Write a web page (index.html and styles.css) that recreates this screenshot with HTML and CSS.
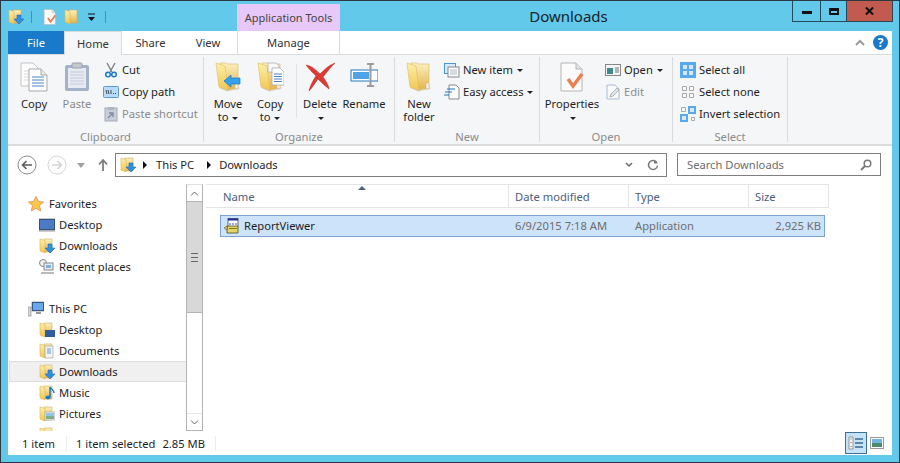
FILE: index.html
```html
<!DOCTYPE html>
<html lang="en">
<head>
    <meta charset="UTF-8">
    <meta name="viewport" content="width=device-width, initial-scale=1.0">
    <title>Downloads</title>
    <link rel="stylesheet" href="styles.css">
</head>
<body>

<svg class="sprite" aria-hidden="true">
    <defs>
        <linearGradient id="doorFill" x1="0" y1="0" x2="0" y2="1">
            <stop offset="0" stop-color="#fdf0a8"/>
            <stop offset="1" stop-color="#f0c650"/>
        </linearGradient>
        <linearGradient id="backFill" x1="0" y1="0" x2="0" y2="1">
            <stop offset="0" stop-color="#fbf0c0"/>
            <stop offset="1" stop-color="#e4b44a"/>
        </linearGradient>
    </defs>
    <symbol id="folder-lg" viewBox="0 0 28 30">
        <path d="M6 1h6l1 1h11v24l-10 2z" fill="url(#backFill)" stroke="#d8b767" stroke-width=".6"/>
        <path d="M2 1l9 3 3 25-9-4z" fill="url(#doorFill)" stroke="#dcbb62" stroke-width=".6"/>
        <path d="M21 21h3v6h-3z" fill="#f4f4f4" stroke="#d2ab5a" stroke-width=".5"/>
        <path d="M6 26l8 3 12-3" fill="none" stroke="#bcbcbc" stroke-width="1" opacity=".5"/>
    </symbol>
    <symbol id="folder-sm" viewBox="0 0 16 16">
        <path d="M5 1h8v13H5z" fill="url(#backFill)" stroke="#d2ab5a" stroke-width=".6"/>
        <path d="M1 1l5 1.500V15l-5-2z" fill="url(#doorFill)" stroke="#d9b65f" stroke-width=".6"/>
    </symbol>
    <symbol id="arrow-dl" viewBox="0 0 16 16">
        <path d="M9 6h4v4h3l-5 5-5-5h3z" fill="#2f8fe0" stroke="#1b6fbf" stroke-width=".6"/>
    </symbol>
    <symbol id="doc-check" viewBox="0 0 26 30">
        <path d="M2 1h15l6 6v22H2z" fill="#fbfbfb" stroke="#b5b5b5"/>
        <path d="M17 1v6h6" fill="#e4e4e4" stroke="#b5b5b5"/>
        <path d="M9 17l5 7 9-12" fill="none" stroke="#ea7f4f" stroke-width="3.400"/>
    </symbol>
</svg>

<div class="window">

    <div class="titlebar">
        <div class="qat">
            <svg class="ic16" viewBox="0 0 16 16"><use href="#folder-sm"/><use href="#arrow-dl"/></svg>
            <span class="qat-sep"></span>
            <svg class="ic16 qat-doc" viewBox="0 0 26 30"><use href="#doc-check"/></svg>
            <svg class="ic16 qat-folder" viewBox="0 0 16 16"><use href="#folder-sm"/></svg>
            <svg class="qat-drop" viewBox="0 0 9 9"><path d="M1 1h7" stroke="#111" stroke-width="1"/><path d="M1 4h7L4.500 8z" fill="#111"/></svg>
            <span class="qat-sep qat-sep-end"></span>
        </div>
        <div class="context-tab">Application Tools</div>
        <div class="title">Downloads</div>
        <div class="controls">
            <div class="ctl ctl-min"><span class="min-glyph"></span></div>
            <div class="ctl ctl-max"><span class="max-glyph"></span></div>
            <div class="ctl ctl-close">
                <svg viewBox="0 0 10 9" class="x-glyph"><path d="M1 .5l8 8M9 .5l-8 8" stroke="#111" stroke-width="2.200"/></svg>
            </div>
        </div>
    </div>

    <div class="tabs">
        <div class="tab tab-file">File</div>
        <div class="tab tab-home">Home</div>
        <div class="tab tab-share">Share</div>
        <div class="tab tab-view">View</div>
        <div class="tab tab-manage">Manage</div>
        <div class="tabs-right">
            <svg class="chev-up" viewBox="0 0 10 7"><path d="M1 6l4-4 4 4" fill="none" stroke="#9a9a9a" stroke-width="2"/></svg>
            <div class="help">?</div>
        </div>
    </div>

    <div class="ribbon">

        <div class="group group-clipboard">
            <div class="group-body">
                <div class="big big-copy">
                    <svg class="big-ic" viewBox="0 0 28 30">
                        <path d="M1 1h12l5 5v18H1z" fill="#fdfdfd" stroke="#c4c4c4"/>
                        <path d="M4 9h5M4 12h5M4 15h5M4 18h5" stroke="#d8d8d8"/>
                        <path d="M9 7h12l6 6v16H9z" fill="#fdfdfd" stroke="#a9a9a9"/>
                        <path d="M21 7v6h6" fill="#eaeaea" stroke="#a9a9a9"/>
                        <path d="M12 15h12M12 18h12M12 21h12M12 24h12" stroke="#4a86c8"/>
                    </svg>
                    <span>Copy</span>
                </div>
                <div class="big big-paste off">
                    <svg class="big-ic" viewBox="0 0 26 30">
                        <rect x="1" y="3" width="24" height="26" rx="2" fill="#a3b1c9"/>
                        <rect x="4" y="6" width="18" height="20" fill="#e6eaf1"/>
                        <path d="M6 10h14M6 13h14M6 16h14M6 19h14M6 22h14" stroke="#c3ccdb"/>
                        <rect x="8" y="1" width="10" height="5" rx="1" fill="#c5c9cf" stroke="#98a0ab"/>
                    </svg>
                    <span>Paste</span>
                </div>
                <div class="small-col">
                    <div class="small">
                        <svg class="ic16" viewBox="0 0 16 16">
                            <path d="M4 1l5 9M12 1L7 10" stroke="#7b8088" stroke-width="1.400"/>
                            <circle cx="5" cy="12.500" r="2.300" fill="none" stroke="#1f78c8" stroke-width="1.500"/>
                            <circle cx="11" cy="12.500" r="2.300" fill="none" stroke="#1f78c8" stroke-width="1.500"/>
                        </svg>
                        <span>Cut</span>
                    </div>
                    <div class="small">
                        <svg class="ic16" viewBox="0 0 16 16">
                            <rect x=".5" y="2.500" width="15" height="11" rx="1" fill="#b8dcfa" stroke="#5a9ad8"/>
                            <path d="M3 6l1 4M5 6l1 4M8 6v4M10 9.500h1M12 9.500h1" stroke="#222" stroke-width=".8"/>
                        </svg>
                        <span>Copy path</span>
                    </div>
                    <div class="small off">
                        <svg class="ic16" viewBox="0 0 16 16">
                            <rect x="2" y="2" width="12" height="13" fill="#c8ced8" stroke="#a3acb9"/>
                            <rect x="5" y="1" width="6" height="3" fill="#aeb5bf"/>
                            <path d="M5 12l4-4M6 7h4v4" fill="none" stroke="#7c8ba0" stroke-width="1.400"/>
                        </svg>
                        <span>Paste shortcut</span>
                    </div>
                </div>
            </div>
            <div class="group-label">Clipboard</div>
        </div>

        <div class="group group-organize">
            <div class="group-body">
                <div class="big big-move">
                    <svg class="big-ic" viewBox="0 0 28 30">
                        <use href="#folder-lg"/>
                        <path d="M10 19l7-6v3h9v6h-9v3z" fill="#35a0ee" stroke="#1a78c4" stroke-width=".7"/>
                    </svg>
                    <span>Move<br>to <i class="caret"></i></span>
                </div>
                <div class="big big-copyto">
                    <svg class="big-ic" viewBox="0 0 28 30">
                        <use href="#folder-lg"/>
                        <path d="M12 1h8l3 3v6h-11z" fill="#f8f8f8" stroke="#aaa" stroke-width=".7"/>
                        <path d="M16 6h8l4 4v13H16z" fill="#fdfdfd" stroke="#a5a5a5" stroke-width=".7"/>
                        <path d="M18 12h8M18 14.500h8M18 17h8M18 19.500h8" stroke="#4a86c8"/>
                    </svg>
                    <span>Copy<br>to <i class="caret"></i></span>
                </div>
                <div class="mini-sep"></div>
                <div class="big big-delete">
                    <svg class="big-ic" viewBox="0 0 31 30">
                        <path d="M1 3c6 1 10 5 14 9 4-4 9-9 15-11-4 4-9 10-12 14 3 4 6 9 6 12-4-3-8-7-11-10-3 4-6 9-9 12 1-5 4-11 7-15C8 11 4 7 1 3z" fill="#dc3a32" stroke="#b72a25" stroke-width=".5"/>
                    </svg>
                    <span>Delete<br><i class="caret"></i></span>
                </div>
                <div class="big big-rename">
                    <svg class="big-ic" viewBox="0 0 28 30">
                        <rect x="1" y="8" width="27" height="11" fill="#fff" stroke="#1e78c0"/>
                        <rect x="3" y="10" width="16" height="7" fill="#4da3e6"/>
                        <path d="M17 2h7M17 24h7M20.500 2v22" stroke="#9c9c9c" stroke-width="2"/>
                    </svg>
                    <span>Rename</span>
                </div>
            </div>
            <div class="group-label">Organize</div>
        </div>

        <div class="group group-new">
            <div class="group-body">
                <div class="big big-newfolder">
                    <svg class="big-ic" viewBox="0 0 28 30"><use href="#folder-lg"/></svg>
                    <span>New<br>folder</span>
                </div>
                <div class="small-col">
                    <div class="small">
                        <svg class="ic16" viewBox="0 0 16 16">
                            <rect x=".5" y="1.500" width="11" height="10" fill="#d7ecfc" stroke="#4a96d8"/>
                            <rect x="4" y="5" width="11" height="10" fill="#fbfbfb" stroke="#888"/>
                            <path d="M6 8h7M6 10h7M6 12h7" stroke="#bbb"/>
                        </svg>
                        <span>New item <i class="caret"></i></span>
                    </div>
                    <div class="small">
                        <svg class="ic16" viewBox="0 0 16 16">
                            <path d="M5 1h7l3 3v11H5z" fill="#fbfbfb" stroke="#8a8a8a"/>
                            <path d="M3 5h8M1 8h7M0 11h5" stroke="#1f78c8" stroke-width="1.200"/>
                        </svg>
                        <span>Easy access <i class="caret"></i></span>
                    </div>
                </div>
            </div>
            <div class="group-label">New</div>
        </div>

        <div class="group group-open">
            <div class="group-body">
                <div class="big big-props">
                    <svg class="big-ic" viewBox="0 0 26 30"><use href="#doc-check"/></svg>
                    <span>Properties<br><i class="caret"></i></span>
                </div>
                <div class="small-col">
                    <div class="small">
                        <svg class="ic16" viewBox="0 0 16 16">
                            <rect x=".5" y="2.500" width="15" height="11" fill="#f4f4f4" stroke="#888"/>
                            <rect x="2" y="6" width="6" height="6" fill="#3a8a8a"/>
                            <path d="M10 6h4M10 8h4M10 10h4" stroke="#777"/>
                        </svg>
                        <span>Open <i class="caret"></i></span>
                    </div>
                    <div class="small off">
                        <svg class="ic16" viewBox="0 0 16 16">
                            <path d="M2 1h8l4 4v10H2z" fill="#f8f9fb" stroke="#a9bcd2"/>
                            <path d="M5 13l1-3 6-6 2 2-6 6z" fill="#dfe6ee" stroke="#9a9a9a" stroke-width=".7"/>
                        </svg>
                        <span>Edit</span>
                    </div>
                </div>
            </div>
            <div class="group-label">Open</div>
        </div>

        <div class="group group-select">
            <div class="group-body">
                <div class="small-col">
                    <div class="small">
                        <svg class="ic16" viewBox="0 0 16 16">
                            <rect width="16" height="16" fill="#5aa9ee"/>
                            <path d="M3 3h4v4H3zM9 3h4v4H9zM3 9h4v4H3zM9 9h4v4H9z" fill="#d5e9fb"/>
                        </svg>
                        <span>Select all</span>
                    </div>
                    <div class="small">
                        <svg class="ic16" viewBox="0 0 16 16">
                            <path d="M2.500 2.500h4v4h-4zM9.500 2.500h4v4h-4zM2.500 9.500h4v4h-4zM9.500 9.500h4v4h-4z" fill="#fafafa" stroke="#a8a8a8"/>
                        </svg>
                        <span>Select none</span>
                    </div>
                    <div class="small">
                        <svg class="ic16" viewBox="0 0 16 16">
                            <path d="M1.500 1.500h4v4h-4zM11.500 11.500h3v3h-3z" fill="#fafafa" stroke="#a8a8a8"/>
                            <path d="M8 0h8v8H8zM0 8h8v8H0z" fill="#5aa9ee"/>
                            <path d="M10 2h4v4h-4zM2 10h4v4H2z" fill="#d5e9fb"/>
                        </svg>
                        <span>Invert selection</span>
                    </div>
                </div>
            </div>
            <div class="group-label">Select</div>
        </div>
    </div>

    <div class="navbar">
        <svg class="nav-btn" viewBox="0 0 20 20">
            <circle cx="10" cy="10" r="9" fill="#fff" stroke="#8a8a8a"/>
            <path d="M15 10H6M9.500 6L5.500 10l4 4" fill="none" stroke="#5c5c5c" stroke-width="1.600"/>
        </svg>
        <svg class="nav-btn nav-fwd" viewBox="0 0 20 20">
            <circle cx="10" cy="10" r="9" fill="#fff" stroke="#d4d4d4"/>
            <path d="M5 10h9M10.500 6l4 4-4 4" fill="none" stroke="#d4d4d4" stroke-width="1.600"/>
        </svg>
        <svg class="nav-drop" viewBox="0 0 8 5"><path d="M0 0h8L4 5z" fill="#a0a0a0"/></svg>
        <svg class="nav-up" viewBox="0 0 10 12"><path d="M5 12V2M1 5.500L5 1l4 4.500" fill="none" stroke="#7d7d7d" stroke-width="1.800"/></svg>

        <div class="address">
            <svg class="ic16" viewBox="0 0 16 16"><use href="#folder-sm"/><use href="#arrow-dl"/></svg>
            <i class="crumb-arrow crumb-first"></i>
            <span class="crumb">This PC</span>
            <i class="crumb-arrow"></i>
            <span class="crumb">Downloads</span>
            <svg class="addr-drop" viewBox="0 0 8 6"><path d="M1 1l3 3 3-3" fill="none" stroke="#6a6a6a" stroke-width="1.500"/></svg>
            <svg class="addr-refresh" viewBox="0 0 12 12"><path d="M9.800 3.500A4.500 4.500 0 1 0 10.500 6.500" fill="none" stroke="#7a7a7a" stroke-width="1.500"/><path d="M7 .5v4h4z" fill="#7a7a7a"/></svg>
        </div>

        <div class="search">
            <span>Search Downloads</span>
            <svg class="search-ic" viewBox="0 0 12 12"><circle cx="7.500" cy="4.500" r="3.300" fill="none" stroke="#7a7a7a" stroke-width="1.500"/><path d="M5 7l-4 4" stroke="#7a7a7a" stroke-width="2"/></svg>
        </div>
    </div>

    <div class="main">
        <div class="tree">
            <div class="tree-row top">
                <svg class="ic16" viewBox="0 0 16 16"><path d="M8 .5l2.300 5 5.200.5-4 3.500 1.200 5.500L8 12.200 3.300 15l1.200-5.500-4-3.500 5.200-.5z" fill="#fbc74a" stroke="#e8894a" stroke-width=".8"/></svg>
                <span>Favorites</span>
            </div>
            <div class="tree-row">
                <svg class="ic16" viewBox="0 0 16 16"><rect x="0" y="2" width="16" height="11" fill="#2a4f8f" stroke="#555" stroke-width=".6"/><rect x="1" y="3" width="14" height="9" fill="#4a7cc4"/><path d="M0 14h16" stroke="#999"/></svg>
                <span>Desktop</span>
            </div>
            <div class="tree-row">
                <svg class="ic16" viewBox="0 0 16 16"><use href="#folder-sm"/><use href="#arrow-dl"/></svg>
                <span>Downloads</span>
            </div>
            <div class="tree-row">
                <svg class="ic16" viewBox="0 0 16 16"><circle cx="4" cy="4" r="3.500" fill="#f2f2f2" stroke="#8a8a8a"/><rect x="5" y="4" width="9" height="7" fill="#e4eaf0" stroke="#8a8a8a"/><rect x="7" y="6" width="5" height="3" fill="#7fb0de"/><path d="M2 13h13v2H2z" fill="#bbb"/></svg>
                <span>Recent places</span>
            </div>
            <div class="tree-gap"></div>
            <div class="tree-row top">
                <svg class="ic16" viewBox="0 0 16 16"><rect x="0" y="6" width="3" height="9" fill="#d4d4d4" stroke="#888" stroke-width=".6"/><rect x="4" y="1" width="12" height="9" fill="#1f4fa8" stroke="#666" stroke-width=".6"/><rect x="5" y="2" width="10" height="7" fill="#6aa8e8"/><path d="M8 12h5" stroke="#999" stroke-width="2"/></svg>
                <span>This PC</span>
            </div>
            <div class="tree-row">
                <svg class="ic16" viewBox="0 0 16 16"><use href="#folder-sm"/><rect x="6" y="8" width="10" height="7" fill="#2e5da0"/></svg>
                <span>Desktop</span>
            </div>
            <div class="tree-row">
                <svg class="ic16" viewBox="0 0 16 16"><use href="#folder-sm"/><path d="M6 3h8v12H6z" fill="#f4f4f4" stroke="#999" stroke-width=".6"/><path d="M8 6h4M8 8h4M8 10h4" stroke="#5a9ad8"/></svg>
                <span>Documents</span>
            </div>
            <div class="tree-row current">
                <svg class="ic16" viewBox="0 0 16 16"><use href="#folder-sm"/><use href="#arrow-dl"/></svg>
                <span>Downloads</span>
            </div>
            <div class="tree-row">
                <svg class="ic16" viewBox="0 0 16 16"><use href="#folder-sm"/><path d="M11 2v10M11 2c1 2 4 3 4 6" fill="none" stroke="#1f78c8" stroke-width="1.500"/><ellipse cx="9" cy="12.500" rx="2.500" ry="2" fill="#1f78c8"/></svg>
                <span>Music</span>
            </div>
            <div class="tree-row">
                <svg class="ic16" viewBox="0 0 16 16"><use href="#folder-sm"/><rect x="6" y="6" width="10" height="8" fill="#eef3f6" stroke="#999" stroke-width=".6"/><rect x="7" y="7" width="8" height="3" fill="#8ec6e8"/><rect x="7" y="10" width="8" height="3" fill="#7fae8a"/></svg>
                <span>Pictures</span>
            </div>
            <div class="tree-row">
                <svg class="ic16" viewBox="0 0 16 16"><use href="#folder-sm"/><rect x="6" y="6" width="10" height="8" fill="#888"/></svg>
                <span>Videos</span>
            </div>
        </div>

        <div class="scrollbar">
            <div class="sb-btn"><svg viewBox="0 0 9 5" class="sb-arrow"><path d="M1 4.500l3.500-3.500 3.500 3.500" fill="none" stroke="#606060"/></svg></div>
            <div class="sb-thumb"><span class="grip"></span></div>
            <div class="sb-track"></div>
            <div class="sb-btn sb-btn-down"><svg viewBox="0 0 9 5" class="sb-arrow"><path d="M1 .5L4.500 4 8 .5" fill="none" stroke="#606060"/></svg></div>
        </div>

        <div class="files">
            <div class="file-head">
                <div class="col-h col-name">Name</div>
                <div class="col-h col-date">Date modified</div>
                <div class="col-h col-type">Type</div>
                <div class="col-h col-size">Size</div>
                <svg class="sort-mark" viewBox="0 0 8 4"><path d="M0 4l4-4 4 4z" fill="#4f6278"/></svg>
            </div>
            <div class="file-row">
                <div class="cell-name">
                    <svg class="ic16" viewBox="0 0 16 16">
                        <rect x="4" y=".5" width="10" height="8" fill="#fff" stroke="#333" stroke-width=".7"/>
                        <rect x="4" y=".5" width="10" height="2" fill="#1f2f9f"/>
                        <path d="M6 5v2M9 5v2M12 5v2" stroke="#2a55b0"/>
                        <path d="M3 8h11v7H3z" fill="#e3d463" stroke="#4a4a2a" stroke-width=".8"/>
                        <path d="M3 8L0 10l3 2z" fill="#f0e78a" stroke="#4a4a2a" stroke-width=".6"/>
                        <path d="M5 10.500h8" stroke="#8a7a20"/>
                    </svg>
                    <span>ReportViewer</span>
                </div>
                <div class="cell-date"><span>6/9/2015 7:18 AM</span></div>
                <div class="cell-type"><span>Application</span></div>
                <div class="cell-size"><span>2,925 KB</span></div>
            </div>
        </div>
    </div>

    <div class="status">
        <span class="st-count">1 item</span>
        <span class="st-sel">1 item selected</span>
        <span class="st-size">2.85 MB</span>
        <div class="view-btns">
            <div class="view-btn view-on">
                <svg viewBox="0 0 16 14" class="view-ic">
                    <path d="M1 1h4v12H1z" fill="#f4f4f4" stroke="#777" stroke-width=".7"/>
                    <path d="M2.500 2.500h1v1h-1zM2.500 10h1v1h-1z" fill="#777"/>
                    <path d="M2.500 6h1v1h-1z" fill="#c83a3a"/>
                    <path d="M7 3h8M7 7h8M7 11h8" stroke="#3c6a92" stroke-width="1.300"/>
                </svg>
            </div>
            <div class="view-btn">
                <svg viewBox="0 0 14 12" class="view-ic2">
                    <rect x=".5" y=".5" width="13" height="11" fill="#fff" stroke="#9a9a9a"/>
                    <rect x="2" y="2" width="10" height="4" fill="#6fb6e4"/>
                    <rect x="2" y="6" width="10" height="4" fill="#4f8a6a"/>
                </svg>
            </div>
        </div>
    </div>
</div>

</body>
</html>
```

FILE: styles.css
```css
html, body {
    margin: 0;
    padding: 0;
}

body {
    font-family: 'Noto Sans', sans-serif;
    font-size: 11.2px;
    color: #1e1e1e;
    background-color: #63c9ea;
    overflow: hidden;
}

svg {
    flex-shrink: 0;
}

.sprite {
    display: block;
    width: 0;
    height: 0;
}

.ic16 {
    display: block;
    width: 16px;
    height: 16px;
}

.off {
    color: #8b8b8b;
}

.window {
    box-sizing: border-box;
    width: 900px;
    height: 463px;
    border: 1px solid #2b3a42;
    padding: 0 7px 7px 7px;
    background-color: #63c9ea;
    display: flex;
    flex-direction: column;
}

/* title bar */
.titlebar {
    display: flex;
    height: 30px;
    flex-shrink: 0;
}

.qat {
    width: 229px;
    display: flex;
    align-items: center;
    padding-top: 2px;
    box-sizing: border-box;
}

.qat-sep {
    width: 1px;
    height: 12px;
    margin-left: 7px;
    background-color: #4b8fa8;
}

.qat-doc {
    margin-left: 10px;
}

.qat-folder {
    margin-left: 6px;
}

.qat-drop {
    width: 9px;
    height: 9px;
    margin-left: 7px;
}

.qat-sep-end {
    margin-left: 9px;
}

.context-tab {
    width: 103px;
    margin-top: 3px;
    background-color: #e8c8f8;
    text-align: center;
    line-height: 28px;
    color: #444;
    font-size: 11px;
}

.title {
    flex: 1;
    text-align: center;
    padding-left: 5px;
    font-size: 15px;
    line-height: 30px;
    color: #14242c;
}

.controls {
    display: flex;
    height: 20px;
    margin-right: -1px;
    border: 1px solid #24495a;
    border-top: none;
}

.ctl {
    display: flex;
    align-items: center;
    justify-content: center;
    border-left: 1px solid #24495a;
}

.ctl-min {
    width: 27px;
    border-left: none;
}

.ctl-max {
    width: 25px;
}

.ctl-close {
    width: 45px;
    background-color: #c25a50;
}

.min-glyph {
    display: block;
    width: 10px;
    height: 3px;
    margin-top: 3px;
    background-color: #111;
}

.max-glyph {
    display: block;
    box-sizing: border-box;
    width: 10px;
    height: 7px;
    border: 2px solid #111;
    border-top-width: 3px;
}

.x-glyph {
    width: 9px;
    height: 8px;
}

/* tab row */
.tabs {
    display: flex;
    height: 23px;
    flex-shrink: 0;
    background-color: #fff;
}

.tab {
    text-align: center;
    line-height: 24px;
    color: #333;
}

.tab-file {
    width: 56px;
    background-color: #1979ca;
    color: #fff;
}

.tab-home {
    box-sizing: border-box;
    width: 58px;
    height: 24px;
    background-color: #f5f6f7;
    border: 1px solid #dadbdc;
    border-bottom: none;
    position: relative;
}

.tab-share {
    width: 57px;
}

.tab-view {
    width: 58px;
}

.tab-manage {
    box-sizing: border-box;
    width: 103px;
    border-left: 1px solid #dadbdc;
    border-right: 1px solid #dadbdc;
}

.tabs-right {
    margin-left: auto;
    display: flex;
    align-items: center;
    padding-right: 4px;
    gap: 8px;
}

.chev-up {
    width: 10px;
    height: 7px;
}

.help {
    width: 15px;
    height: 15px;
    border-radius: 50%;
    background-color: #1979ca;
    color: #fff;
    text-align: center;
    font-weight: bold;
    font-size: 12px;
    line-height: 15px;
}

/* ribbon */
.ribbon {
    display: flex;
    box-sizing: border-box;
    height: 92px;
    flex-shrink: 0;
    padding-top: 3px;
    background-color: #f5f6f7;
    border-top: 1px solid #dadbdc;
    border-bottom: 2px solid #dadbdc;
}

.group {
    box-sizing: border-box;
    height: 85px;
    margin-top: -1px;
    display: flex;
    flex-direction: column;
    border-right: 1px solid #dadbdc;
}

.group-clipboard { width: 196px; }
.group-organize { width: 191px; }
.group-new { width: 145px; }
.group-open { width: 133px; }
.group-select { width: 115px; }

.group-body {
    flex: 1;
    display: flex;
    align-items: flex-start;
}

.group-label {
    height: 14px;
    line-height: 18px;
    text-align: center;
    color: #8b8b8b;
}

.big {
    padding-top: 5px;
    display: flex;
    flex-direction: column;
    align-items: center;
    text-align: center;
    line-height: 13px;
}

.big-ic {
    display: block;
    height: 30px;
    width: 28px;
    margin-bottom: 5px;
}

.big-copy { width: 44px; margin-left: 4px; }
.big-paste { width: 42px; }
.big-move { width: 44px; margin-left: 2px; }
.big-copyto { width: 40px; }
.big-delete { width: 40px; margin-left: 3px; }
.big-rename { width: 48px; }
.big-newfolder { width: 40px; margin-left: 4px; }
.big-props { width: 56px; margin-left: 4px; }

.big-delete .big-ic {
    width: 31px;
}

.big-paste .big-ic,
.big-props .big-ic {
    width: 26px;
}

.big-newfolder + .small-col {
    margin-left: 5px;
}

.caret {
    display: inline-block;
    width: 0;
    height: 0;
    margin-left: 1px;
    vertical-align: middle;
    border-left: 3px solid transparent;
    border-right: 3px solid transparent;
    border-top: 3px solid #222;
}

.mini-sep {
    width: 1px;
    height: 54px;
    margin: 7px 0 0 6px;
    background-color: #e1e2e3;
}

.small-col {
    margin-top: 2px;
    margin-left: 5px;
}

.group-select .small-col {
    margin-left: 7px;
}

.small {
    height: 22px;
    display: flex;
    align-items: center;
    gap: 3px;
    white-space: nowrap;
}

.small span {
    padding-bottom: 2px;
}

/* address row */
.navbar {
    height: 38px;
    flex-shrink: 0;
    box-sizing: border-box;
    padding-top: 7px;
    display: flex;
    align-items: flex-start;
    background-color: #fff;
}

.nav-btn {
    width: 20px;
    height: 20px;
    margin: 2px 0 0 9px;
}

.nav-fwd {
    margin-left: 10px;
}

.nav-drop {
    width: 8px;
    height: 5px;
    margin: 10px 0 0 10px;
}

.nav-up {
    width: 10px;
    height: 12px;
    margin: 6px 0 0 13px;
}

.address {
    box-sizing: border-box;
    width: 552px;
    height: 24px;
    margin-left: 7px;
    padding-left: 4px;
    border: 1px solid #7f7f7f;
    display: flex;
    align-items: center;
}

.crumb {
    padding-bottom: 2px;
}

.crumb-arrow {
    display: block;
    width: 0;
    height: 0;
    margin: 0 8px 0 13px;
    border-top: 4px solid transparent;
    border-bottom: 4px solid transparent;
    border-left: 4px solid #111;
}

.crumb-first {
    margin: 0 9px 0 7px;
}

.addr-drop {
    width: 8px;
    height: 6px;
    margin-left: auto;
}

.addr-refresh {
    width: 12px;
    height: 12px;
    margin: 0 7px 0 14px;
}

.search {
    box-sizing: border-box;
    width: 204px;
    height: 23px;
    margin-left: 10px;
    padding: 0 8px 0 9px;
    border: 1px solid #7f7f7f;
    color: #6d6d6d;
    display: flex;
    align-items: center;
    justify-content: space-between;
}

.search-ic {
    width: 12px;
    height: 12px;
}

/* main area */
.main {
    flex: 1;
    min-height: 0;
    display: flex;
    background-color: #fff;
}

.tree {
    width: 178px;
    padding-top: 9px;
    overflow: hidden;
}

.tree-row {
    box-sizing: border-box;
    height: 21px;
    margin-left: 1px;
    padding-left: 29px;
    display: flex;
    align-items: center;
    gap: 4px;
    border: 1px solid transparent;
    border-right: none;
}

.tree-row.top {
    padding-left: 18px;
    gap: 5px;
}

.tree-row.current {
    background-color: #f0f0f0;
    border-color: #dedede;
}

.tree-gap {
    height: 21px;
}

.scrollbar {
    box-sizing: border-box;
    width: 17px;
    display: flex;
    flex-direction: column;
    border: 1px solid #b4b4b4;
    border-top-color: #e0e0e0;
}

.sb-btn {
    height: 16px;
    display: flex;
    align-items: center;
    justify-content: center;
}

.sb-btn-down {
    border-top: 1px solid #e8e8e8;
}

.sb-arrow {
    width: 9px;
    height: 5px;
}

.sb-thumb {
    height: 112px;
    box-sizing: border-box;
    background-color: #d8d8d8;
    border-top: 1px solid #b4b4b4;
    border-bottom: 1px solid #b4b4b4;
    display: flex;
    align-items: center;
    justify-content: center;
}

.grip {
    display: block;
    width: 7px;
    height: 7px;
    border-top: 1px solid #666;
    border-bottom: 1px solid #666;
    background: linear-gradient(#666, #666) center / 7px 1px no-repeat;
}

.sb-track {
    flex: 1;
}

.files {
    flex: 1;
    margin-left: 3px;
}

.file-head {
    position: relative;
    display: flex;
    width: 623px;
    height: 24px;
    box-sizing: border-box;
    border-top: 1px solid #e5e5e5;
    border-bottom: 1px solid #e5e5e5;
}

.col-h {
    box-sizing: border-box;
    border-right: 1px solid #e5e5e5;
    line-height: 23px;
    color: #4c607a;
    padding-left: 6px;
}

.col-name { width: 303px; padding-left: 17px; }
.col-date { width: 120px; }
.col-type { width: 120px; }
.col-size { width: 80px; }

.sort-mark {
    position: absolute;
    left: 152px;
    top: 1px;
    width: 8px;
    height: 4px;
}

.file-row {
    box-sizing: border-box;
    width: 605px;
    height: 22px;
    margin: 7px 0 0 14px;
    display: flex;
    align-items: center;
    background-color: #cde3fa;
    border: 1px solid #7da2ce;
    color: #6d6d6d;
}

.file-row span {
    display: block;
    padding-bottom: 2px;
}

.cell-name {
    width: 294px;
    padding-left: 3px;
    box-sizing: border-box;
    display: flex;
    align-items: center;
    gap: 4px;
    color: #1e1e1e;
}

.cell-date,
.cell-type {
    width: 120px;
}

.cell-size {
    flex: 1;
    text-align: right;
    padding-right: 3px;
}

/* status bar */
.status {
    height: 24px;
    flex-shrink: 0;
    display: flex;
    align-items: center;
    background-color: #fff;
}

.st-count {
    margin-left: 14px;
    padding-right: 11px;
    border-right: 1px solid #ececec;
}

.st-sel {
    margin-left: 9px;
}

.st-size {
    margin-left: 7px;
    padding-right: 10px;
    border-right: 1px solid #ececec;
}

.view-btns {
    margin-left: auto;
    margin-right: 8px;
    display: flex;
    align-items: center;
    gap: 3px;
}

.view-btn {
    display: flex;
    align-items: center;
    justify-content: center;
}

.view-on {
    box-sizing: border-box;
    width: 22px;
    height: 22px;
    background-color: #c6e2f8;
    border: 1px solid #3c7096;
}

.view-ic {
    width: 16px;
    height: 14px;
}

.view-ic2 {
    width: 14px;
    height: 12px;
}
```
